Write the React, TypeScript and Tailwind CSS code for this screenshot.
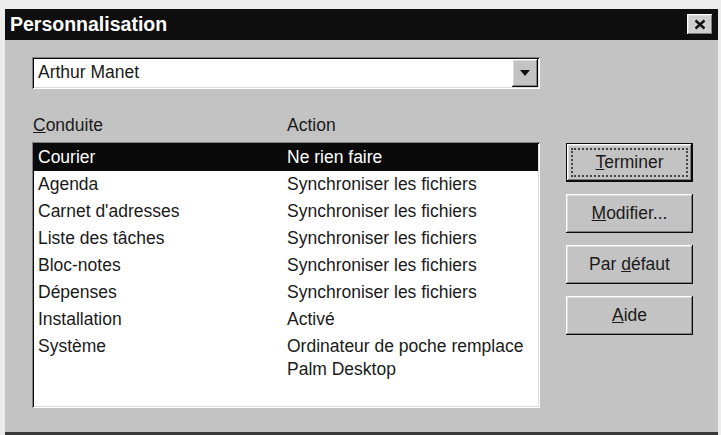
import React from "react";

const raised =
  "shadow-[inset_-1px_-1px_#0a0a0a,inset_1px_1px_#ffffff,inset_-2px_-2px_#808080,inset_2px_2px_#dcdcdc]";
const sunken =
  "shadow-[inset_1px_1px_#808080,inset_-1px_-1px_#ffffff,inset_2px_2px_#0a0a0a,inset_-2px_-2px_#dcdcdc]";

const rows: { name: string; action: string[] }[] = [
  { name: "Courier", action: ["Ne rien faire"] },
  { name: "Agenda", action: ["Synchroniser les fichiers"] },
  { name: "Carnet d'adresses", action: ["Synchroniser les fichiers"] },
  { name: "Liste des tâches", action: ["Synchroniser les fichiers"] },
  { name: "Bloc-notes", action: ["Synchroniser les fichiers"] },
  { name: "Dépenses", action: ["Synchroniser les fichiers"] },
  { name: "Installation", action: ["Activé"] },
  { name: "Système", action: ["Ordinateur de poche remplace", "Palm Desktop"] },
];

function Btn({ children, isDefault }: { children: React.ReactNode; isDefault?: boolean }) {
  if (isDefault) {
    return (
      <div className="h-[39px] w-[127px] border border-[#0a0a0a] bg-[#c3c3c3]">
        <div className={`h-full w-full p-[4px] ${raised}`}>
          <div className="flex h-full w-full items-center justify-center border-2 border-dotted border-[#444]">
            {children}
          </div>
        </div>
      </div>
    );
  }
  return (
    <div className={`flex h-[39px] w-[127px] items-center justify-center bg-[#c3c3c3] ${raised}`}>
      {children}
    </div>
  );
}

export default function App() {
  return (
    <div
      className="h-[435px] w-[721px] bg-[#ececec] pl-[5px] pt-[9px] text-[17.5px] text-[#1a1a1a]"
      style={{ fontFamily: '"Liberation Sans", Arial, sans-serif' }}
    >
      <div className="flex h-[426px] w-[713px] flex-col border-b-[3px] border-[#3a3a3a] bg-[#c3c3c3]">
        {/* Title bar */}
        <div className="flex h-[31px] shrink-0 items-center justify-between bg-[#0f0f0f] pl-[5px] pr-[5px]">
          <span className="text-[19.5px] font-bold leading-none text-white">Personnalisation</span>
          <div className={`flex h-[21px] w-[26px] items-center justify-center bg-[#cfcfcf] ${raised}`}>
            <svg width="12" height="11" viewBox="0 0 12 11">
              <path d="M1.5 1.5l9 8M10.5 1.5l-9 8" stroke="#111" strokeWidth="2.4" />
            </svg>
          </div>
        </div>

        <div className="flex flex-col pl-[27px]">
          {/* Combobox */}
          <div className={`mt-[17px] flex h-[32px] w-[508px] items-center bg-white p-[2px] ${sunken}`}>
            <span className="flex-1 pl-[4px] leading-none">Arthur Manet</span>
            <div className={`flex h-[28px] w-[26px] items-center justify-center bg-[#c3c3c3] ${raised}`}>
              <svg width="10" height="6" viewBox="0 0 10 6">
                <path d="M0 0h10L5 6z" fill="#111" />
              </svg>
            </div>
          </div>

          {/* Column labels */}
          <div className="mt-[26px] flex h-[27px] leading-[20px]">
            <span className="w-[255px] pl-[1px]">
              <span className="underline">C</span>onduite
            </span>
            <span>Action</span>
          </div>

          <div className="flex">
            {/* List */}
            <div className={`h-[266px] w-[508px] bg-white p-[2px] ${sunken}`}>
              {rows.map((r, i) => (
                <div
                  key={r.name}
                  className={
                    i === 0
                      ? "flex h-[27px] items-center bg-[#0a0a0a] text-white"
                      : "flex min-h-[27px] items-start pt-[4px]"
                  }
                >
                  <span className="w-[253px] pl-[4px] leading-[19px]">{r.name}</span>
                  <div className="flex flex-col leading-[19px]">
                    {r.action.map((a, j) => (
                      <span key={a} className={j > 0 ? "mt-[4px]" : ""}>
                        {a}
                      </span>
                    ))}
                  </div>
                </div>
              ))}
            </div>

            {/* Buttons */}
            <div className="ml-[26px] mt-[1px] flex flex-col gap-[12px]">
              <Btn isDefault>
                <span>
                  <span className="underline">T</span>erminer
                </span>
              </Btn>
              <Btn>
                <span>
                  <span className="underline">M</span>odifier...
                </span>
              </Btn>
              <Btn>
                <span>
                  Par <span className="underline">d</span>éfaut
                </span>
              </Btn>
              <Btn>
                <span>
                  <span className="underline">A</span>ide
                </span>
              </Btn>
            </div>
          </div>
        </div>
      </div>
    </div>
  );
}
